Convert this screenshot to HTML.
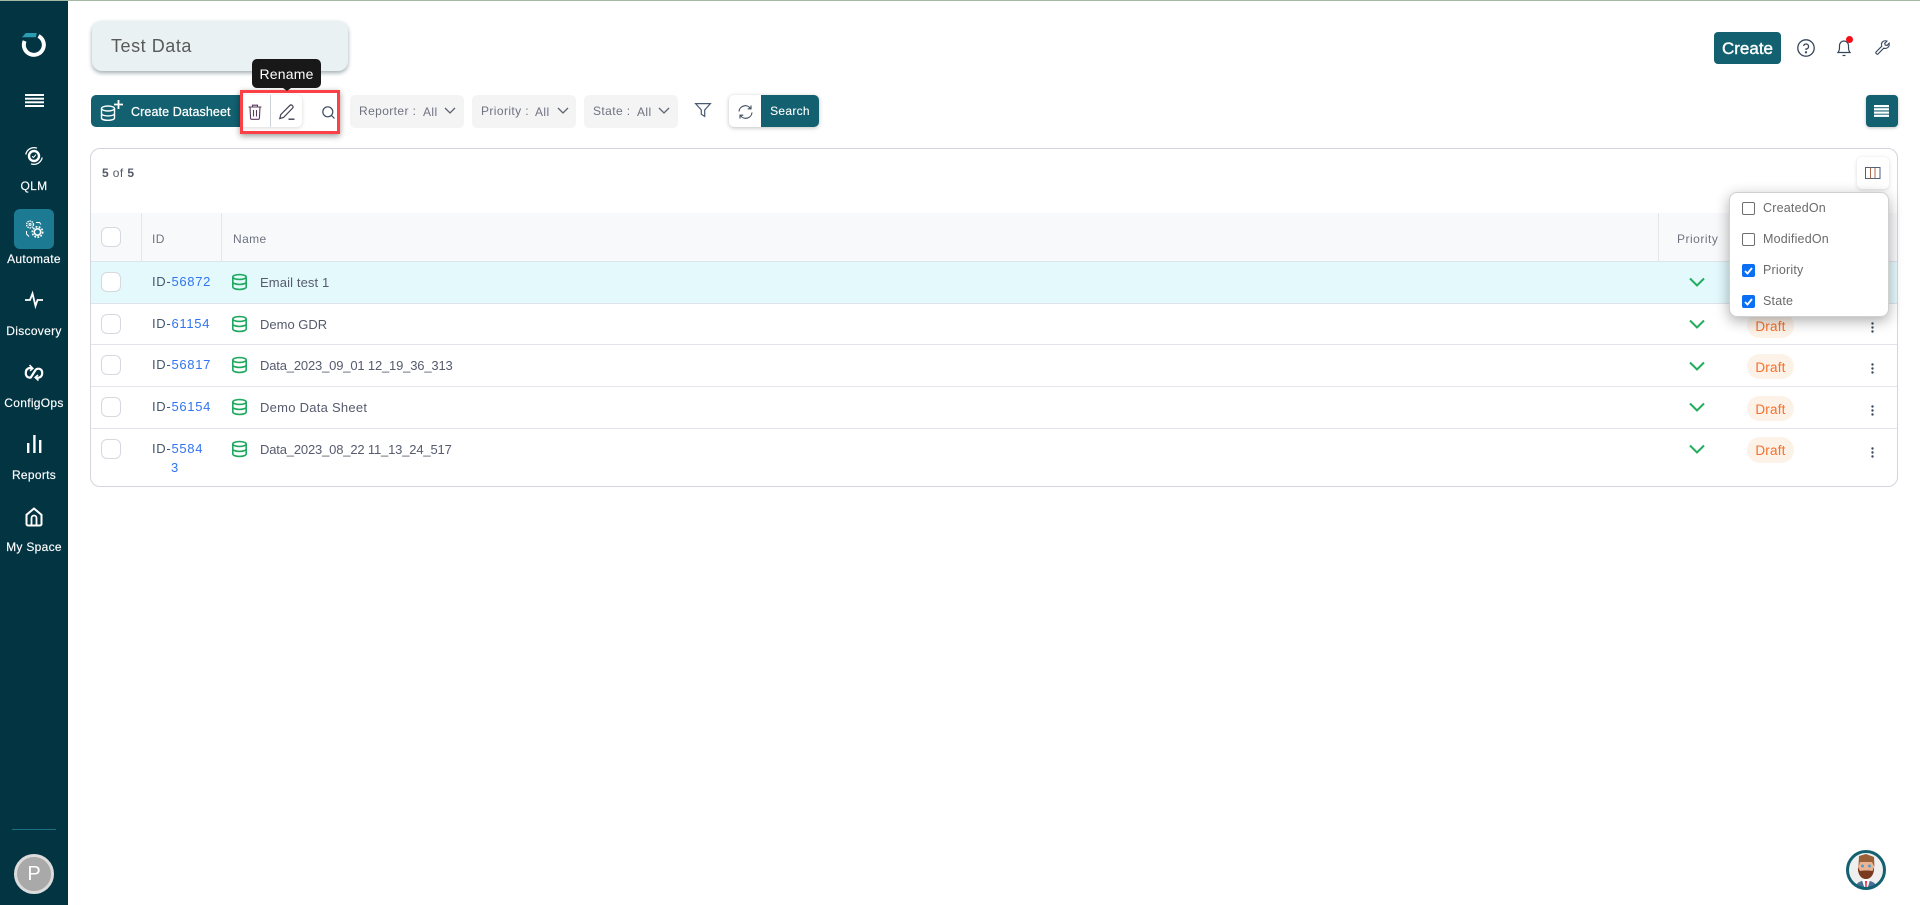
<!DOCTYPE html>
<html><head><meta charset="utf-8"><title>Test Data</title>
<style>
*{box-sizing:border-box}
html,body{margin:0;padding:0;width:1920px;height:905px;overflow:hidden;background:#fff;font-family:"Liberation Sans",sans-serif}
.a{position:absolute}
.t{position:absolute;line-height:20px;height:20px;white-space:nowrap}
.nav{position:absolute;left:0;width:68px;text-align:center;color:#fff;font-size:12px;line-height:20px;letter-spacing:.3px;-webkit-text-stroke:.15px #fff}
.f{position:absolute;top:95px;height:33px;background:#f4f4f5;border-radius:5px}
.cb{position:absolute;left:101px;width:20px;height:20px;border:1px solid #d6d9df;border-radius:6px;background:#fff}
.id{position:absolute;left:152px;font-size:13px;line-height:20px;height:20px;color:#44586a;letter-spacing:.7px;white-space:nowrap}
.id b{font-weight:400;color:#3174f2}
.nm{position:absolute;left:260px;font-size:13px;line-height:20px;color:#565b6e;white-space:nowrap}
.line{position:absolute;left:91px;width:1806px;height:1px;background:#e4e5ec}
.pill{position:absolute;left:1747px;width:47px;height:25px;border-radius:13px;background:#fdf2e8;color:#f5702a;font-size:13.5px;line-height:27px;text-align:center;letter-spacing:.2px}
.mi{position:absolute;left:1763px;font-size:12.5px;line-height:20px;color:#6a6a6a;letter-spacing:.2px}
.ck{position:absolute;left:1742px;width:13px;height:13px;border-radius:2px;border:1px solid #6f6f6f;background:#fff}
.ck.on{background:#0b6ff5;border-color:#0b6ff5}
svg{position:absolute;overflow:visible}
</style></head><body>
<div class="a" style="left:0;top:0;width:1920px;height:1px;background:#a3b9a3"></div>
<div class="a" style="left:0;top:1px;width:68px;height:904px;background:#033442"></div>

<!-- logo -->
<svg style="left:20px;top:31px" width="28" height="28" viewBox="0 0 28 28" fill="none">
<path d="M4.600 10A10 10 0 1 0 18.500 5" stroke="#fff" stroke-width="4"/>
<path d="M2 6.200 5.800 2H16.800L15.800 6.200Z" fill="#2a9db3"/></svg>
<!-- hamburger -->
<svg style="left:25px;top:93px" width="19" height="14" viewBox="0 0 19 14" fill="#fff">
<rect y="1" width="19" height="2"/><rect y="4.700" width="19" height="2"/><rect y="8.300" width="19" height="2"/><rect y="12" width="19" height="2"/></svg>
<!-- QLM icon -->
<svg style="left:25px;top:147px" width="18" height="18" viewBox="0 0 18 18" fill="none" stroke="#fff">
<circle cx="9" cy="9" r="5" stroke-width="2.400"/><path d="M.8 7.500A8.400 8.400 0 0 1 12 1.200M17.200 10.500A8.400 8.400 0 0 1 6 16.800" stroke-width="1.300"/><path d="M7 9.200 8.500 10.500 11 7.600" stroke-width="1"/></svg>
<div class="nav" style="top:176px">QLM</div>
<div class="a" style="left:14px;top:209px;width:40px;height:40px;background:#1c7b93;border-radius:6px"></div>
<svg style="left:25px;top:220px" width="19" height="19" viewBox="0 0 19 19" fill="none" stroke="#fff">
<circle cx="5" cy="4.500" r="3.400" stroke-width="1.400" stroke-dasharray="1.400 .8"/><circle cx="5" cy="4.500" r="1" stroke-width="1"/>
<circle cx="12.500" cy="12" r="3.200" stroke-width="1.600"/><circle cx="12.500" cy="12" r="5.200" stroke-width="1.600" stroke-dasharray="1.800 1.400"/>
<path d="M11 2.500h3.500l1.500 2M1.500 11v3l2.500 2.500" stroke-width="1"/></svg>
<div class="nav" style="top:249px">Automate</div>
<svg style="left:25px;top:292px" width="18" height="16" viewBox="0 0 18 16" fill="none" stroke="#fff" stroke-width="1.800"><path d="M0 8H5L7.500 1.500 10.500 14 12.500 8H18"/></svg>
<div class="nav" style="top:321px">Discovery</div>
<svg style="left:24px;top:364px" width="20" height="18" viewBox="0 0 20 18" fill="none" stroke="#fff" stroke-width="2.200"><path d="M8.500 4.600C6.500 3.400 2 3.600 1.800 8.800 1.600 13 5 14 6.800 13.400L11.500 6C13 4 18 4 18.200 8.800 18.400 13.500 14 14.400 11.500 13.400"/><path d="M5.500 1 8.800 4.400 6 6.800M14.500 16.500 11.200 13.400 14 11" stroke-width="1.600"/></svg>
<div class="nav" style="top:393px">ConfigOps</div>
<svg style="left:26px;top:434px" width="16" height="20" viewBox="0 0 16 20" fill="#fff"><rect x="1" y="9" width="2.400" height="10"/><rect x="7.200" y="1" width="2.400" height="18"/><rect x="13" y="6" width="2.400" height="13"/></svg>
<div class="nav" style="top:465px">Reports</div>
<svg style="left:25px;top:507px" width="18" height="20" viewBox="0 0 18 20" fill="none" stroke="#fff" stroke-width="2"><path d="M1.500 7.800 9 1.500l7.500 6.300V17a1.500 1.500 0 0 1-1.500 1.500H3A1.500 1.500 0 0 1 1.500 17Z"/><path d="M6.500 18V11a2.500 2.500 0 0 1 5 0v7" stroke-width="1.800"/></svg>
<div class="nav" style="top:537px">My Space</div>
<div class="a" style="left:12px;top:829px;width:44px;height:1px;background:#1c6e83"></div>
<div class="a" style="left:14px;top:854px;width:40px;height:40px;border-radius:50%;background:#a9a9a9;border:3px solid #dcdcdc;color:#fff;font-size:20px;line-height:34px;text-align:center">P</div>

<!-- Title -->
<div class="a" style="left:92px;top:21px;width:256px;height:50px;background:#e9f1f3;border-radius:10px;box-shadow:0 2px 4px rgba(40,70,80,.45)"></div>
<div class="t" style="left:111px;top:36px;font-size:18px;color:#5a5a5a;letter-spacing:.55px">Test Data</div>

<!-- Create datasheet -->
<div class="a" style="left:91px;top:95px;width:150px;height:32px;background:#126070;border-radius:5px 0 0 5px"></div>
<svg style="left:100px;top:99px" width="24" height="22" viewBox="0 0 24 22" fill="none" stroke="#fff" stroke-width="1.400"><ellipse cx="8" cy="9.500" rx="6.500" ry="2.500"/><path d="M1.500 9.500V19c0 1.500 3 2.300 6.500 2.300S14.500 20.500 14.500 19V9.500M1.500 14.500c0 1.500 3 2.400 6.500 2.400s6.500-.9 6.500-2.400"/><path d="M18.500 1v9M14 5.500h9" stroke-width="1.800"/></svg>
<div class="t" style="left:131px;top:102px;font-size:12.500px;color:#fff;letter-spacing:.1px;-webkit-text-stroke:.25px #fff">Create Datasheet</div>

<!-- action group -->
<div class="a" style="left:241px;top:95px;width:61px;height:32px;background:#fff;border-radius:0 5px 5px 0;box-shadow:0 1px 4px rgba(0,0,0,.15)"></div>
<div class="a" style="left:270px;top:95px;width:1px;height:32px;background:#cfd3da"></div>
<svg style="left:248px;top:104px" width="14" height="16" viewBox="0 0 14 16" fill="none" stroke="#5a3a5c" stroke-width="1.100"><path d="M.5 3H13.500M4.500 3V1.200H9.500V3M2 3 2.600 14.200a1.200 1.200 0 0 0 1.200 1.100H10.200a1.200 1.200 0 0 0 1.200-1.100L12 3M5.500 6V12.500M8.500 6V12.500"/></svg>
<svg style="left:279px;top:104px" width="16" height="16" viewBox="0 0 16 16" fill="none" stroke="#3f3f52" stroke-width="1.200"><path d="M.8 14.500 1.800 10.500 11 1.300a1.400 1.400 0 0 1 2 0l.7.700a1.400 1.400 0 0 1 0 2L4.500 13.500Z"/><path d="M9.500 15.200H15.500" stroke-width="1.400"/></svg>
<svg style="left:322px;top:106px" width="13" height="13" viewBox="0 0 13 13" fill="none" stroke="#3b4a5c" stroke-width="1.200"><circle cx="5.800" cy="5.800" r="5"/><path d="M9.500 9.500 12.500 12.500"/></svg>
<!-- red box -->
<div class="a" style="left:240px;top:90px;width:100px;height:44px;border:3px solid #fb4145;box-shadow:0 2px 6px rgba(0,0,0,.4)"></div>
<!-- tooltip -->
<div class="a" style="left:252px;top:59px;width:69px;height:29px;background:#181818;border-radius:5px;color:#fff;font-size:14px;line-height:31px;text-align:center;letter-spacing:.2px">Rename</div>
<div class="a" style="left:283px;top:88px;width:0;height:0;border-left:4px solid transparent;border-right:4px solid transparent;border-top:3px solid #181818"></div>

<!-- filters -->
<div class="f" style="left:350px;width:114px"></div>
<div class="t" style="left:359px;top:101px;font-size:12px;color:#6f7280;letter-spacing:.4px">Reporter :</div>
<div class="t" style="left:423px;top:102px;font-size:12px;color:#6f7280;letter-spacing:.4px">All</div>
<svg style="left:444px;top:107px" width="12" height="7" viewBox="0 0 12 7" fill="none" stroke="#5e6472" stroke-width="1.300"><path d="M1 1 6 6 11 1"/></svg>
<div class="f" style="left:472px;width:104px"></div>
<div class="t" style="left:481px;top:101px;font-size:12px;color:#6f7280;letter-spacing:.4px">Priority :</div>
<div class="t" style="left:535px;top:102px;font-size:12px;color:#6f7280;letter-spacing:.4px">All</div>
<svg style="left:557px;top:107px" width="12" height="7" viewBox="0 0 12 7" fill="none" stroke="#5e6472" stroke-width="1.300"><path d="M1 1 6 6 11 1"/></svg>
<div class="f" style="left:584px;width:94px"></div>
<div class="t" style="left:593px;top:101px;font-size:12px;color:#6f7280;letter-spacing:.4px">State :</div>
<div class="t" style="left:637px;top:102px;font-size:12px;color:#6f7280;letter-spacing:.4px">All</div>
<svg style="left:658px;top:107px" width="12" height="7" viewBox="0 0 12 7" fill="none" stroke="#5e6472" stroke-width="1.300"><path d="M1 1 6 6 11 1"/></svg>
<svg style="left:695px;top:103px" width="16" height="14" viewBox="0 0 16 14" fill="none" stroke="#4a5a70" stroke-width="1.200"><path d="M.6.600H15.400L9.700 7V13.400L6.300 11.200V7Z"/></svg>
<div class="a" style="left:729px;top:95px;width:90px;height:32px;border-radius:5px;background:#fff;box-shadow:0 1px 4px rgba(0,0,0,.25)"></div>
<div class="a" style="left:761px;top:95px;width:58px;height:32px;border-radius:0 5px 5px 0;background:#126070;color:#fff;font-size:12px;line-height:32px;text-align:center;letter-spacing:.3px;-webkit-text-stroke:.1px #fff">Search</div>
<svg style="left:738px;top:105px" width="15" height="14" viewBox="0 0 15 14" fill="none" stroke="#3b4a5c" stroke-width="1.100"><path d="M1 6.500A6.300 6.300 0 0 1 12.500 3.500M14 7.500A6.300 6.300 0 0 1 2.500 10.500"/><path d="M13 .5V3.800H9.700M2 13.500V10.200H5.300"/></svg>

<!-- top right -->
<div class="a" style="left:1714px;top:32px;width:67px;height:32px;border-radius:4px;background:#126070;color:#fff;font-size:17px;line-height:34px;text-align:center;-webkit-text-stroke:.4px #fff">Create</div>
<svg style="left:1797px;top:39px" width="18" height="18" viewBox="0 0 18 18" fill="none" stroke="#33455a" stroke-width="1.300"><circle cx="9" cy="9" r="8.200"/><path d="M6.600 7A2.500 2.500 0 1 1 9 10V11"/><circle cx="9" cy="13.300" r=".5"/></svg>
<svg style="left:1837px;top:38px" width="14" height="19" viewBox="0 0 14 19" fill="none" stroke="#33455a" stroke-width="1.200"><path d="M1 14.500C2.800 12.500 2.500 10 2.500 7.500A4.500 4.500 0 0 1 11.500 7.500C11.500 10 11.200 12.500 13 14.500Z"/><path d="M5.500 17.500H8.500"/></svg>
<div class="a" style="left:1846px;top:36px;width:7px;height:7px;border-radius:50%;background:#f60d17"></div>
<svg style="left:1875px;top:40px" width="15" height="15" viewBox="0 0 15 15" fill="none" stroke="#33455a" stroke-width="1.100"><path d="M1 12 6.800 6.200C6 4 6.800 2.400 8 1.500 9.300.6 10.700.6 12 1.100L9.700 3.300 10.200 5 12 5.500 14.100 3.200C14.500 5 14 6.500 12.800 7.500 11.500 8.500 10 8.700 8.700 8.200L3 14C2.200 14.800 .2 13.200 1 12Z"/></svg>
<div class="a" style="left:1866px;top:95px;width:32px;height:32px;border-radius:4px;background:#126070;box-shadow:0 1px 3px rgba(0,0,0,.25)"></div>
<svg style="left:1874px;top:105px" width="15" height="12" viewBox="0 0 15 12" fill="#fff"><rect y="0" width="15" height="2.200"/><rect y="3.200" width="15" height="2.200"/><rect y="6.500" width="15" height="2.200"/><rect y="9.700" width="15" height="2.200"/></svg>

<!-- table card -->
<div class="a" style="left:90px;top:148px;width:1808px;height:339px;border:1px solid #d3d5de;border-radius:10px"></div>
<div class="t" style="left:102px;top:163px;font-size:12px;color:#555b6a;letter-spacing:.4px"><b>5</b> of <b>5</b></div>
<div class="a" style="left:1857px;top:157px;width:32px;height:32px;border-radius:5px;background:#fff;box-shadow:0 1px 4px rgba(0,0,0,.15)"></div>
<svg style="left:1865px;top:167px" width="16" height="12" viewBox="0 0 16 12" fill="none" stroke="#50617a" stroke-width="1"><rect x=".5" y=".5" width="14.500" height="11"/><path d="M5.500.5V11.500" stroke="#a86a4a"/><path d="M10 .5V11.500" stroke="#a86a4a"/></svg>

<div class="a" style="left:91px;top:213px;width:1806px;height:48px;background:#f8f9fb"></div>
<div class="a" style="left:141px;top:213px;width:1px;height:48px;background:#e4e6ea"></div>
<div class="a" style="left:221px;top:213px;width:1px;height:48px;background:#e4e6ea"></div>
<div class="a" style="left:1658px;top:213px;width:1px;height:48px;background:#e4e6ea"></div>
<div class="line" style="top:261px;background:#dfe3ea"></div>
<div class="t" style="left:152px;top:229px;font-size:12px;color:#6e7480;letter-spacing:.4px">ID</div>
<div class="t" style="left:233px;top:229px;font-size:12px;color:#6e7480;letter-spacing:.4px">Name</div>
<div class="t" style="left:1677px;top:229px;font-size:12px;color:#6e7480;letter-spacing:.5px">Priority</div>

<div class="a" style="left:91px;top:262px;width:1806px;height:41px;background:#e3f9fc"></div>
<div class="line" style="top:303px;background:#dfe3ea"></div>
<div class="line" style="top:344px"></div>
<div class="line" style="top:386px"></div>
<div class="line" style="top:428px"></div>

<div class="cb" style="top:227px"></div>
<div class="cb" style="top:272px"></div>
<div class="cb" style="top:314px"></div>
<div class="cb" style="top:355px"></div>
<div class="cb" style="top:397px"></div>
<div class="cb" style="top:439px"></div>

<div class="id" style="top:272px">ID-<b>56872</b></div>
<div class="id" style="top:314px">ID-<b>61154</b></div>
<div class="id" style="top:355px">ID-<b>56817</b></div>
<div class="id" style="top:397px">ID-<b>56154</b></div>
<div class="id" style="top:439px">ID-<b>5584</b></div>
<div class="id" style="top:458px;left:171px"><b>3</b></div>

<div class="nm" style="top:272.500px;letter-spacing:.12px">Email test 1</div>
<div class="nm" style="top:314.500px;letter-spacing:0">Demo GDR</div>
<div class="nm" style="top:355.500px;letter-spacing:-.17px">Data_2023_09_01 12_19_36_313</div>
<div class="nm" style="top:397.500px;letter-spacing:.26px">Demo Data Sheet</div>
<div class="nm" style="top:439.500px;letter-spacing:-.17px">Data_2023_08_22 11_13_24_517</div>

<svg width="0" height="0" style="position:absolute"><defs>
<g id="db" fill="none" stroke="#1fa85f" stroke-width="1.600"><ellipse cx="7.500" cy="3" rx="6.700" ry="2.400"/><path d="M.8 3V13C.8 14.300 3.800 15.400 7.500 15.400S14.200 14.300 14.200 13V3M.8 8C.8 9.300 3.800 10.400 7.500 10.400S14.200 9.300 14.200 8"/></g>
<path id="chev" d="M1 1.500 8 8.500 15 1.500" fill="none" stroke="#22ad5c" stroke-width="2"/>
<g id="keb" fill="#3c4a5e"><circle cx="1.500" cy="1.500" r="1.200"/><circle cx="1.500" cy="5.500" r="1.200"/><circle cx="1.500" cy="9.500" r="1.200"/></g>
</defs></svg>
<svg style="left:232px;top:274px" width="15" height="16"><use href="#db"/></svg>
<svg style="left:232px;top:316px" width="15" height="16"><use href="#db"/></svg>
<svg style="left:232px;top:357px" width="15" height="16"><use href="#db"/></svg>
<svg style="left:232px;top:399px" width="15" height="16"><use href="#db"/></svg>
<svg style="left:232px;top:441px" width="15" height="16"><use href="#db"/></svg>

<svg style="left:1689px;top:277px" width="16" height="10"><use href="#chev"/></svg>
<svg style="left:1689px;top:319px" width="16" height="10"><use href="#chev"/></svg>
<svg style="left:1689px;top:361px" width="16" height="10"><use href="#chev"/></svg>
<svg style="left:1689px;top:402px" width="16" height="10"><use href="#chev"/></svg>
<svg style="left:1689px;top:444px" width="16" height="10"><use href="#chev"/></svg>

<div class="pill" style="top:313px">Draft</div>
<div class="pill" style="top:354px">Draft</div>
<div class="pill" style="top:396px">Draft</div>
<div class="pill" style="top:437px;height:26px;line-height:27px">Draft</div>

<svg style="left:1871px;top:322px" width="3" height="11"><use href="#keb"/></svg>
<svg style="left:1871px;top:363px" width="3" height="11"><use href="#keb"/></svg>
<svg style="left:1871px;top:405px" width="3" height="11"><use href="#keb"/></svg>
<svg style="left:1871px;top:447px" width="3" height="11"><use href="#keb"/></svg>

<!-- dropdown -->
<div class="a" style="left:1729px;top:192px;width:160px;height:125px;background:#fff;border-radius:8px;border:1px solid #d0d0d0;box-shadow:0 4px 14px rgba(0,0,0,.32)"></div>
<div class="ck" style="top:202px"></div><div class="mi" style="top:198px">CreatedOn</div>
<div class="ck" style="top:233px"></div><div class="mi" style="top:229px">ModifiedOn</div>
<div class="ck on" style="top:264px"></div><div class="mi" style="top:260px">Priority</div>
<div class="ck on" style="top:295px"></div><div class="mi" style="top:291px">State</div>
<svg style="left:1744px;top:267px" width="9" height="8"><path d="M1 4 3.500 6.500 8 1" fill="none" stroke="#fff" stroke-width="1.800"/></svg>
<svg style="left:1744px;top:298px" width="9" height="8"><path d="M1 4 3.500 6.500 8 1" fill="none" stroke="#fff" stroke-width="1.800"/></svg>

<!-- bot avatar -->
<svg style="left:1846px;top:850px" width="40" height="40" viewBox="0 0 40 40">
<defs><clipPath id="cc"><circle cx="20" cy="20" r="18"/></clipPath></defs>
<circle cx="20" cy="20" r="18.500" fill="#efefef"/>
<g clip-path="url(#cc)">
<path d="M8 40C9 33 14 31 20 30 26 31 31 33 32 40Z" fill="#4a7196"/>
<path d="M16 30 20 29 24 30 21 40H19Z" fill="#fff"/><path d="M19 31H21L20.600 38H19.400Z" fill="#e8344a"/>
<path d="M13 10H27L28 18C28 26 24 29 20 29 16 29 12 26 12 18Z" fill="#e9b493"/>
<path d="M13 6 20 4 28 7 28.500 17 26 12H14L12.500 17Z" fill="#9a6038"/>
<path d="M12 17 14 21 18 20.500H23L26.500 21 28 17C28.500 24 25 29 20 29 15 29 11.500 24 12 17Z" fill="#7a3a20"/>
<circle cx="16.500" cy="16" r="1.500" fill="#5a9bc9"/><circle cx="23.500" cy="16" r="1.500" fill="#5a9bc9"/>
</g>
<circle cx="20" cy="20" r="18.500" fill="none" stroke="#126070" stroke-width="3"/></svg>
</body></html>
